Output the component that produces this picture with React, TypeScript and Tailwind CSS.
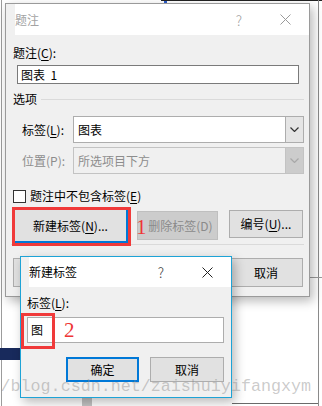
import type { ReactNode } from 'react'

const font = "font-['Noto_Sans_CJK_SC',sans-serif]"

function U({ children }: { children: ReactNode }) {
  return <span className="underline underline-offset-2">{children}</span>
}

function CloseIcon({ color }: { color: string }) {
  return (
    <svg width="11" height="11" viewBox="0 0 11 11">
      <path d="M0.5 0.5 L10.5 10.5 M10.5 0.5 L0.5 10.5" stroke={color} strokeWidth="1" fill="none" />
    </svg>
  )
}

function Chevron({ color }: { color: string }) {
  return (
    <svg width="9" height="5" viewBox="0 0 9 5">
      <path d="M0.5 0.5 L4.5 4.5 L8.5 0.5" stroke={color} strokeWidth="1.2" fill="none" />
    </svg>
  )
}

function TitleBar({ title, dim, h }: { title: string; dim?: boolean; h: string }) {
  return (
    <div className={`${h} bg-white flex items-center shrink-0`}>
      <span className={`text-[12px] leading-[16px] ${dim ? 'text-[#a3a3a3]' : 'text-black'}`}>{title}</span>
      <span className={`ml-auto text-[14px] leading-[16px] font-light ${dim ? 'text-[#a3a3a3]' : 'text-[#444]'}`}>?</span>
      <span className="ml-[38px] mr-[18px] flex">
        <CloseIcon color={dim ? '#9a9a9a' : '#222'} />
      </span>
    </div>
  )
}

export default function App() {
  return (
    <div className={`relative w-[322px] h-[406px] overflow-hidden bg-white ${font} text-[12px] text-black`}>
      {/* stuff behind the dialogs */}
      <div className="absolute left-[1px] top-0 w-px h-full bg-[#9c9c9c]" />
      <div className="absolute left-[164px] top-0 w-[3px] h-[5px] bg-[#2a5bc8]" />
      <div className="absolute left-[161px] top-0 w-[161px] h-px bg-[#222]" />
      <div className="absolute left-[318px] top-0 w-px h-full bg-[#8a8a8a]" />
      <div className="absolute left-[310px] top-[277px] w-[12px] h-px bg-[#9a9a9a]" />
      <div className="absolute left-[232px] top-[403px] w-[86px] h-px bg-[#6a6a6a]" />
      <div className="absolute left-0 top-[348px] w-[20px] h-[12px] bg-[#182a5c]" />
      <div className="absolute left-[82px] top-[398px] w-[10px] h-[8px] bg-[#c4c4c4]" />

      {/* caption dialog */}
      <div className="absolute left-[5px] top-[3px] w-[305px] h-[294px] border border-[#9a9a9a] bg-[#f0f0f0] flex flex-col shadow-[3px_4px_10px_rgba(0,0,0,0.28)]">
        <div className="pl-[9px]">
          <TitleBar title="题注" dim h="h-[31px]" />
        </div>

        <div className="mt-[10px] ml-[7px] leading-[16px]">
          题注(<U>C</U>):
        </div>
        <div className="mt-[4px] ml-[11px] w-[282px] h-[19px] border border-[#7a7a7a] bg-white pl-[3px] leading-[17px] whitespace-pre">
          图表  1
        </div>

        <div className="mt-[7px] ml-[7px] mr-[5px] flex items-center leading-[16px]">
          <span>选项</span>
          <div className="flex-1 h-px bg-[#dadada] ml-[4px]" />
        </div>

        <div className="mt-[9px] ml-[16px] flex items-center">
          <span className="w-[51px] leading-[16px]">
            标签(<U>L</U>):
          </span>
          <div className="w-[231px] h-[27px] border border-[#adadad] bg-white flex">
            <span className="flex-1 pl-[4px] leading-[25px]">图表</span>
            <div className="w-[18px] bg-[#e5e5e5] border-l border-[#adadad] flex items-center justify-center">
              <Chevron color="#333" />
            </div>
          </div>
        </div>

        <div className="mt-[4px] ml-[16px] flex items-center text-[#8d8d8d]">
          <span className="w-[51px] leading-[16px]">位置(P):</span>
          <div className="w-[231px] h-[27px] border border-[#c3c3c3] bg-[#f0f0f0] flex">
            <span className="flex-1 pl-[4px] leading-[25px]">所选项目下方</span>
            <div className="w-[18px] bg-[#cccccc] border-l border-[#c3c3c3] flex items-center justify-center">
              <Chevron color="#a8a8a8" />
            </div>
          </div>
        </div>

        <div className="mt-[14px] ml-[7px] flex items-center leading-[16px]">
          <div className="w-[13px] h-[13px] border border-[#333] bg-white" />
          <span className="ml-[4px]">
            题注中不包含标签(<U>E</U>)
          </span>
        </div>

        <div className="mt-[4px] ml-[7px] flex items-start">
          <div className="relative">
            <div className="w-[115px] h-[35px] border-2 border-[#0078d7] bg-[#e1e1e1] flex items-center justify-center leading-[16px]">
              新建标签(<U>N</U>)...
            </div>
            <div className="absolute left-[-1px] top-[-1px] right-[-3px] bottom-[-3px] border-[3px] border-[#f03a3a]" />
          </div>
          <div className="ml-[9px] mt-[3px] w-[81px] h-[29px] border border-[#bfbfbf] bg-[#cccccc] text-[#8a8a8a] flex items-center justify-center pl-[6px] leading-[16px]">
            删除标签(D)
          </div>
          <div className="ml-[11px] mt-[2px] w-[74px] h-[28px] border border-[#adadad] bg-[#e1e1e1] flex items-center justify-center leading-[16px]">
            编号(<U>U</U>)...
          </div>
        </div>

        <div className="mt-[1px] mx-[5px] h-px bg-[#dadada]" />

        {/* the left buttons of this row sit under the second dialog */}
        <div className="mt-[13px] ml-[7px] mr-[6px] flex">
          <div className="w-[120px] h-[29px] border border-[#adadad] bg-[#e1e1e1]" />
          <div className="ml-[10px] w-[74px] h-[29px] border border-[#adadad] bg-[#e1e1e1]" />
          <div className="ml-auto w-[74px] h-[29px] border border-[#adadad] bg-[#e1e1e1] flex items-center justify-center leading-[16px]">
            取消
          </div>
        </div>
      </div>

      <span className="absolute left-[136px] top-[216px] font-['Liberation_Serif',serif] text-[21px] leading-[22px] text-[#ee3535]">
        1
      </span>

      {/* new label dialog */}
      <div className="absolute left-[20px] top-[256px] w-[212px] h-[142px] border border-[#1ea3d6] bg-[#f0f0f0] flex flex-col shadow-[3px_4px_10px_rgba(0,0,0,0.28)]">
        <div className="pl-[8px]">
          <TitleBar title="新建标签" h="h-[30px]" />
        </div>
        <div className="mt-[8px] ml-[6px] leading-[16px]">
          标签(<U>L</U>):
        </div>
        <div className="relative mt-[6px] ml-[6px] w-[197px] h-[26px] border border-[#adadad] bg-white pl-[3px] leading-[24px]">
          图
          <div className="absolute left-[-7px] top-[-5px] w-[34px] h-[36px] border-[3px] border-[#f03a3a]" />
          <span className="absolute left-[36px] top-[1px] font-['Liberation_Serif',serif] text-[21px] leading-[22px] text-[#ee3535]">
            2
          </span>
        </div>
        <div className="mt-[14px] ml-[45px] flex">
          <div className="w-[73px] h-[25px] border-2 border-[#0078d7] bg-[#e1e1e1] flex items-center justify-center leading-[16px]">
            确定
          </div>
          <div className="ml-[11px] w-[74px] h-[25px] border border-[#adadad] bg-[#e1e1e1] flex items-center justify-center leading-[16px]">
            取消
          </div>
        </div>
      </div>

      {/* watermark */}
      <div className="absolute right-[11px] top-[377px] font-['Liberation_Mono',monospace] text-[16.7px] leading-[20px] text-[rgba(140,140,140,0.45)] whitespace-nowrap pointer-events-none">
        http://blog.csdn.net/zaishuiyifangxym
      </div>
    </div>
  )
}
